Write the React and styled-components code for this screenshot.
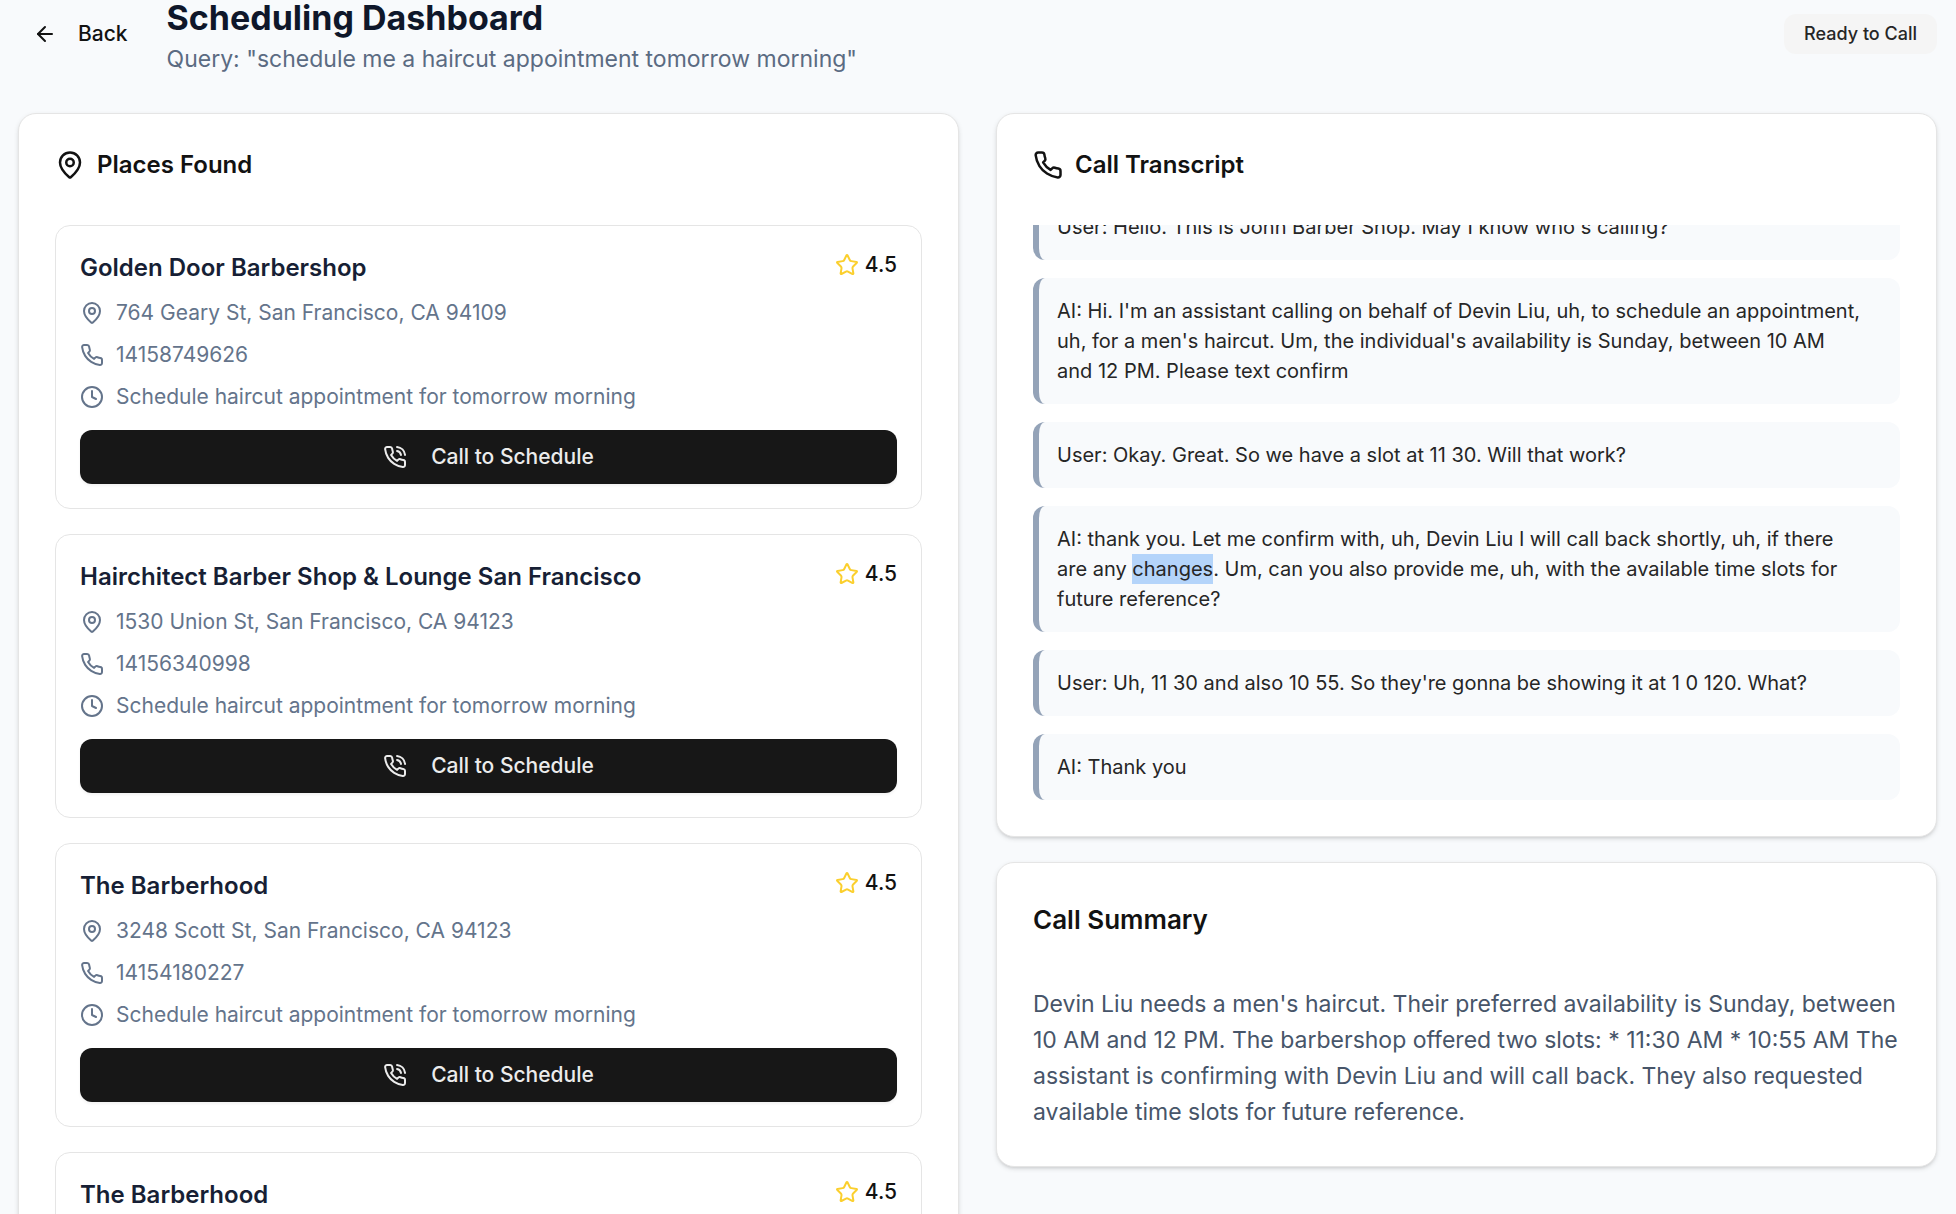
import React, { useLayoutEffect, useRef } from "react";
import styled, { createGlobalStyle } from "styled-components";
import { ArrowLeft, Clock, MapPin, Star } from "lucide-react";

const places = [
  {
    id: 1,
    name: "Golden Door Barbershop",
    address: "764 Geary St, San Francisco, CA 94109",
    phone: "14158749626",
    rating: "4.5",
  },
  {
    id: 2,
    name: "Hairchitect Barber Shop & Lounge San Francisco",
    address: "1530 Union St, San Francisco, CA 94123",
    phone: "14156340998",
    rating: "4.5",
  },
  {
    id: 3,
    name: "The Barberhood",
    address: "3248 Scott St, San Francisco, CA 94123",
    phone: "14154180227",
    rating: "4.5",
  },
  {
    id: 4,
    name: "The Barberhood",
    address: "3248 Scott St, San Francisco, CA 94123",
    phone: "14154180227",
    rating: "4.5",
  },
];

const messages = [
  <>User: Hello. This is John Barber Shop. May I know who's calling?</>,
  <>
    AI: Hi. I'm an assistant calling on behalf of Devin Liu, uh, to schedule an
    appointment, uh, for a men's haircut. Um, the individual's availability is
    Sunday, between 10 AM and 12 PM. Please text confirm
  </>,
  <>User: Okay. Great. So we have a slot at 11 30. Will that work?</>,
  <>
    AI: thank you. Let me confirm with, uh, Devin Liu I will call back shortly,
    uh, if there are any <mark>changes</mark>. Um, can you also provide me, uh,
    with the available time slots for future reference?
  </>,
  <>
    User: Uh, 11 30 and also 10 55. So they're gonna be showing it at 1 0 120.
    What?
  </>,
  <>AI: Thank you</>,
];

//handset icon, the waves are only drawn on the call buttons
const PhoneIcon = ({ size, waves }) => (
  <svg
    width={size}
    height={size}
    viewBox="0 0 24 24"
    fill="none"
    stroke="currentColor"
    strokeWidth="2"
    strokeLinecap="round"
    strokeLinejoin="round"
    aria-hidden="true"
  >
    <path d="M22 16.92v3a2 2 0 0 1-2.18 2 19.79 19.79 0 0 1-8.63-3.07 19.5 19.5 0 0 1-6-6 19.79 19.79 0 0 1-3.07-8.67A2 2 0 0 1 4.11 2h3a2 2 0 0 1 2 1.72 12.84 12.84 0 0 0 .7 2.81 2 2 0 0 1-.45 2.11L8.09 9.91a16 16 0 0 0 6 6l1.27-1.27a2 2 0 0 1 2.11-.45 12.84 12.84 0 0 0 2.81.7A2 2 0 0 1 22 16.92z" />
    {waves && (
      <>
        <path d="M14.05 2a9 9 0 0 1 8 7.94" />
        <path d="M14.05 6A5 5 0 0 1 18 10" />
      </>
    )}
  </svg>
);

//one result in the list of places
const PlaceCard = ({ place }) => (
  <Place>
    <PlaceTop>
      <PlaceName>{place.name}</PlaceName>
      <Rating>
        <Star size={24} color="#fbcf2d" />
        {place.rating}
      </Rating>
    </PlaceTop>
    <Details>
      <Detail>
        <MapPin size={24} />
        {place.address}
      </Detail>
      <Detail>
        <PhoneIcon size={24} />
        {place.phone}
      </Detail>
      <Detail>
        <Clock size={24} />
        Schedule haircut appointment for tomorrow morning
      </Detail>
    </Details>
    <CallButton type="button">
      <PhoneIcon size={24} waves />
      Call to Schedule
    </CallButton>
  </Place>
);

const App = () => {
  const transcriptRef = useRef(null);

  //keeps the newest message in view
  useLayoutEffect(() => {
    transcriptRef.current.scrollTop = transcriptRef.current.scrollHeight;
  }, []);

  return (
    <Page>
      <GlobalStyle />
      <Header>
        <BackButton type="button">
          <ArrowLeft size={24} />
          Back
        </BackButton>
        <Heading>
          <Title>Scheduling Dashboard</Title>
          <Query>
            Query: "schedule me a haircut appointment tomorrow morning"
          </Query>
        </Heading>
        <Status>Ready to Call</Status>
      </Header>
      <Columns>
        <Card>
          <CardTitle>
            <MapPin size={30} />
            Places Found
          </CardTitle>
          <PlaceList>
            {places.map((place) => (
              <PlaceCard key={place.id} place={place} />
            ))}
          </PlaceList>
        </Card>
        <SideColumn>
          <Card>
            <CardTitle>
              <PhoneIcon size={30} />
              Call Transcript
            </CardTitle>
            <Transcript ref={transcriptRef}>
              {messages.map((message, index) => (
                <Message key={index}>{message}</Message>
              ))}
            </Transcript>
          </Card>
          <Card>
            <CardTitle $large>Call Summary</CardTitle>
            <Summary>
              Devin Liu needs a men's haircut. Their preferred availability is
              Sunday, between 10 AM and 12 PM. The barbershop offered two slots:
              * 11:30 AM * 10:55 AM The assistant is confirming with Devin Liu
              and will call back. They also requested available time slots for
              future reference.
            </Summary>
          </Card>
        </SideColumn>
      </Columns>
    </Page>
  );
};

export default App;

const GlobalStyle = createGlobalStyle`
  * {
    box-sizing: border-box;
  }
  html {
    background-color: #f8fafc;
  }
  body {
    margin: 0;
    font-family: Inter, sans-serif;
    color: #121212;
  }
  svg {
    flex-shrink: 0;
  }
  h1, h2, h3, p {
    margin: 0;
  }
`;

const Page = styled.div`
  height: 100vh;
  padding: 0 19px 0 18px;
  overflow: hidden;
`;
const Header = styled.header`
  display: flex;
  align-items: center;
  gap: 24px;
  margin-top: -9px;
  margin-bottom: 36px;
`;
const BackButton = styled.button`
  display: flex;
  align-items: center;
  gap: 21px;
  padding: 9px 15px;
  border: none;
  border-radius: 12px;
  background: none;
  color: inherit;
  font: 500 21px/30px Inter, sans-serif;
`;
const Heading = styled.div`
  flex: 1;
  padding-top: 9px;
`;
const Title = styled.h1`
  margin-bottom: 5px;
  font-size: 34px;
  line-height: 36px;
  font-weight: 700;
  color: #0f172a;
`;
const Query = styled.p`
  font-size: 23px;
  line-height: 36px;
  color: #5b6b82;
`;
const Status = styled.span`
  padding: 8px 20px;
  border-radius: 12px;
  background-color: #f5f5f5;
  color: #262626;
  font-size: 18px;
  line-height: 24px;
  font-weight: 500;
`;

const Columns = styled.main`
  display: grid;
  grid-template-columns: repeat(2, minmax(0, 1fr));
  gap: 37px;
  align-items: start;
`;
const SideColumn = styled.div`
  display: flex;
  flex-direction: column;
  gap: 25px;
`;
const Card = styled.section`
  padding: 36px;
  border: 1px solid #e5e5e5;
  border-radius: 18px;
  background-color: white;
  box-shadow: 0 2px 5px rgba(0, 0, 0, 0.1), 0 2px 3px -1px rgba(0, 0, 0, 0.1);
`;
const CardTitle = styled.h2`
  display: flex;
  align-items: center;
  gap: 12px;
  margin-bottom: 45px;
  font-size: ${({ $large }) => ($large ? "26px" : "24px")};
  line-height: ${({ $large }) => ($large ? "42px" : "30px")};
  font-weight: 600;
`;

const PlaceList = styled.div`
  display: flex;
  flex-direction: column;
  gap: 25px;
`;
const Place = styled.article`
  padding: 24px;
  border: 1px solid #e5e5e5;
  border-radius: 15px;
`;
const PlaceTop = styled.div`
  display: flex;
  align-items: flex-start;
  justify-content: space-between;
`;
const PlaceName = styled.h3`
  font-size: 24px;
  line-height: 36px;
  font-weight: 600;
  color: #171f35;
`;
const Rating = styled.div`
  display: flex;
  align-items: center;
  gap: 6px;
  font-size: 21px;
  line-height: 30px;
  font-weight: 500;
`;
const Details = styled.div`
  display: flex;
  flex-direction: column;
  gap: 12px;
  margin: 12px 0 18px;
`;
const Detail = styled.div`
  display: flex;
  align-items: center;
  gap: 12px;
  font-size: 21px;
  line-height: 30px;
  color: #64748b;
`;
const CallButton = styled.button`
  display: flex;
  align-items: center;
  justify-content: center;
  gap: 24px;
  width: 100%;
  padding: 12px 24px;
  border: none;
  border-radius: 12px;
  background-color: #171717;
  color: #ececec;
  font: 500 21px/30px Inter, sans-serif;
  box-shadow: 0 2px 3px rgba(0, 0, 0, 0.05);
`;

const Transcript = styled.div`
  display: flex;
  flex-direction: column;
  gap: 18px;
  max-height: 575px;
  overflow-y: auto;
  scrollbar-width: none;
`;
const Message = styled.p`
  flex-shrink: 0;
  padding: 18px 38px 18px 18px;
  border-left: 6px solid #94a3b8;
  border-radius: 12px;
  background-color: #f8fafc;
  color: #262626;
  font-size: 20px;
  line-height: 30px;

  mark {
    display: inline-block;
    background-color: #b4d4fa;
    color: inherit;
  }
`;
const Summary = styled.p`
  font-size: 23px;
  line-height: 36px;
  color: #475569;
`;
